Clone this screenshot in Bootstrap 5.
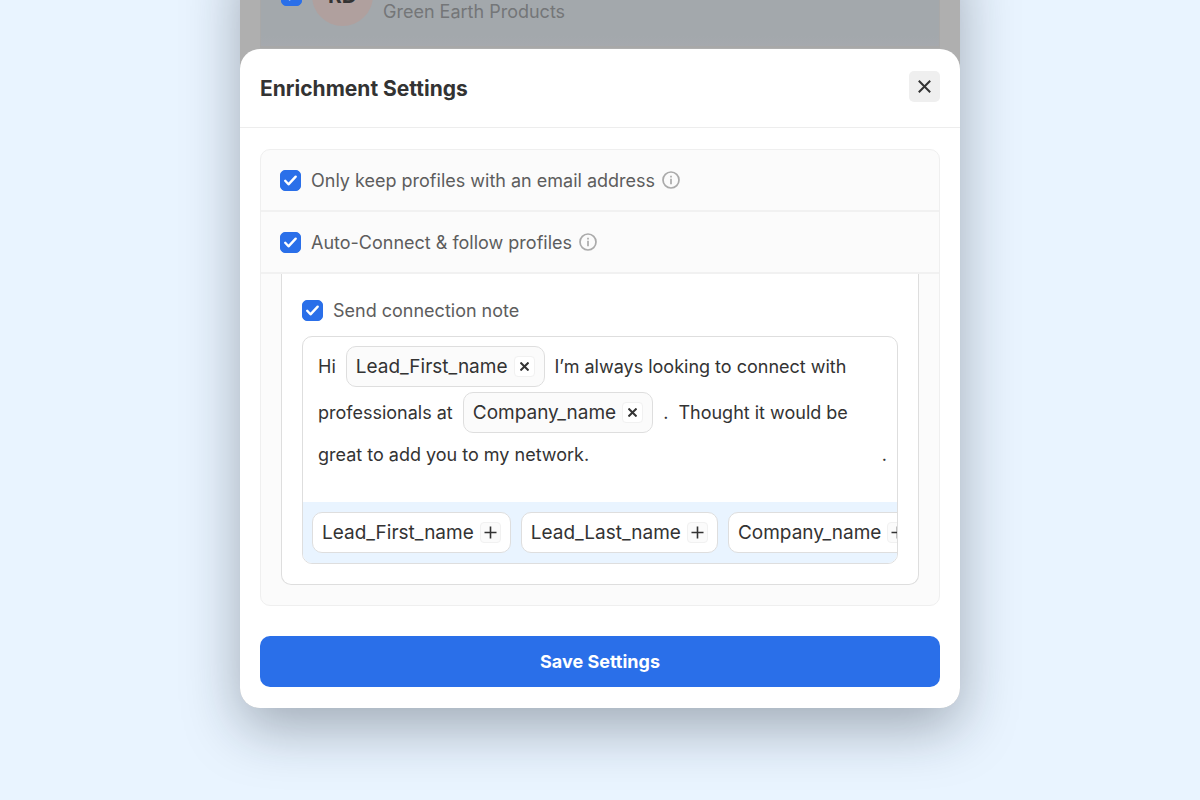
<!DOCTYPE html>
<html lang="en">
<head>
<meta charset="utf-8">
<meta name="viewport" content="width=device-width, initial-scale=1">
<title>Enrichment Settings</title>
<link rel="stylesheet" href="https://cdn.jsdelivr.net/npm/bootstrap@5.3.0/dist/css/bootstrap.min.css">
<style>
body { background: #e9f4ff; font-family: Inter, "Liberation Sans", sans-serif; font-size: 18px; line-height: 24px; color: #333; }
main { padding-bottom: 92px; overflow: hidden; }
.phone { width: 100%; max-width: 720px; margin-top: -55px; background: #afafaf; border-radius: 0 0 20px 20px; box-shadow: 0 20px 56px rgba(20, 28, 40, .34); }
.behind { padding: 0 20px 20px; margin-bottom: -19px; }
.lead-row { background: linear-gradient(#a3a8ac 90%, #a6a9ae); border: solid #a8a8a8; border-width: 0 1px 2px; color: #747678; padding: 20px; gap: 10px; }
.lead-row .form-check-input { background-color: #4468ae; border-color: #4468ae; opacity: 1; }
.avatar { width: 61px; height: 61px; background: #b0a09e; color: #333; font-size: 21px; }
.company { padding-top: 33px; }
.sheet { position: relative; background: #fff; border-radius: 20px; }
.sheet-head { padding: 22px 20px 25px; border-bottom: 1px solid #ededed; }
.sheet-title { font-size: 21px; line-height: 26px; padding-top: 5px; }
.sheet-body { padding: 21px 20px; }
.close-btn { width: 31px; height: 31px; background: #efefef; border: 0; border-radius: 5px; padding: 0; }
.form-check-input { width: 21px; height: 21px; margin: 0; flex: none; }
.form-check-input[type=checkbox] { border-radius: 5px; }
.form-check-input:checked { background-color: #2a6fe9; border-color: #2a6fe9; }
.form-check-input:checked[type=checkbox] { background-image: url("data:image/svg+xml,%3csvg xmlns='http://www.w3.org/2000/svg' viewBox='0 0 21 21'%3e%3cpath d='M5.2 10.8l3.3 3.5 7.2-7.6' fill='none' stroke='%23fff' stroke-width='2.4' stroke-linecap='round' stroke-linejoin='round'/%3e%3c/svg%3e"); background-origin: border-box; }
label { padding-top: 2px; }
.settings { background: #fbfbfb; border: 1px solid #efefef; border-radius: 10px; margin-bottom: 30px; }
.setting { height: 62px; border-bottom: 2px solid #f1f1f1; color: #5d5d5d; gap: 10px; padding: 0 19px; }
.info { width: 18px; height: 18px; border: 0; padding: 0; background: none; margin-left: -3px; }
.note-box { background: #fff; border: 1px solid #dedede; border-top: 0; border-radius: 0 0 10px 10px; margin: 0 20px 20px; padding: 23px 20px 20px; }
.note-check { gap: 10px; color: #5d5d5d; margin-bottom: 13px; }
.editor { border: 1px solid #dedede; border-radius: 10px; overflow: hidden; }
.message { padding: 9px 10px 27px 15px; line-height: 41px; }
.line { gap: 10px; height: 41px; }
.line + .line { margin-top: 5px; }
.line + .line-last { margin-top: 1px; }
.token { height: 41px; border: 1px solid #dedede; border-radius: 10px; background: #fbfbfb; padding: 0 9px; gap: 6px; flex: none; color: #333; font-size: 19px; line-height: 24px; }
.token-btn { width: 21px; height: 21px; border: 1px solid #f1f1f1; border-radius: 4px; background: #fff; padding: 0; flex: none; }
.tokens { background: #e9f4ff; padding: 10px 9px; gap: 10px; overflow: hidden; }
.tokens .token { background: #fff; }
.tokens .token-btn { background: #fbfbfb; }
.btn-save, .btn-save:hover { background: #2a6fe9; color: #fff; border: 0; border-radius: 10px; height: 51px; font-size: 18px; font-weight: 700; }
svg { display: block; }
</style>
</head>
<body>
<main class="d-flex justify-content-center">
  <div class="phone">
    <div class="behind">
      <div class="lead-row d-flex align-items-center">
        <input class="form-check-input" type="checkbox" checked disabled aria-label="Green Earth Products">
        <div class="avatar rounded-circle d-flex align-items-center justify-content-center fw-bold">RD</div>
        <div class="company">Green Earth Products</div>
      </div>
    </div>
    <section class="sheet" aria-labelledby="title">
      <header class="sheet-head d-flex justify-content-between align-items-start">
        <h1 class="sheet-title fw-bold mb-0" id="title">Enrichment Settings</h1>
        <button class="close-btn d-flex align-items-center justify-content-center" type="button" aria-label="Close">
          <svg width="13" height="13" viewBox="0 0 13 13" stroke="#333" stroke-width="2"><path d="M.8.8l11.4 11.4M12.2.8L.8 12.2"/></svg>
        </button>
      </header>
      <form class="sheet-body">
        <div class="settings">
          <div class="setting d-flex align-items-center">
            <input class="form-check-input" type="checkbox" id="email" checked>
            <label for="email">Only keep profiles with an email address</label>
            <button class="info" type="button" aria-label="About email filter"><svg width="18" height="18" viewBox="0 0 18 18" fill="none" stroke="#aaa" stroke-width="1.7"><circle cx="9" cy="9" r="8"/><path d="M9 7.8v5.4M9 4.8v1.8"/></svg></button>
          </div>
          <div class="setting d-flex align-items-center">
            <input class="form-check-input" type="checkbox" id="connect" checked>
            <label for="connect">Auto-Connect &amp; follow profiles</label>
            <button class="info" type="button" aria-label="About auto-connect"><svg width="18" height="18" viewBox="0 0 18 18" fill="none" stroke="#aaa" stroke-width="1.7"><circle cx="9" cy="9" r="8"/><path d="M9 7.8v5.4M9 4.8v1.8"/></svg></button>
          </div>
          <div class="note-box">
            <div class="note-check d-flex align-items-center">
              <input class="form-check-input" type="checkbox" id="note" checked>
              <label for="note">Send connection note</label>
            </div>
            <div class="editor">
              <div class="message">
                <div class="line d-flex">
                  <span>Hi</span>
                  <span class="token d-flex align-items-center">Lead_First_name
                    <button class="token-btn d-flex align-items-center justify-content-center" type="button" aria-label="Remove first name"><svg width="9" height="9" viewBox="0 0 9 9" stroke="#333" stroke-width="2"><path d="M.5.5l8 8M8.5.5l-8 8"/></svg></button></span>
                  <span class="text-nowrap">I’m always looking to connect with</span>
                </div>
                <div class="line d-flex">
                  <span class="text-nowrap">professionals at</span>
                  <span class="token d-flex align-items-center">Company_name
                    <button class="token-btn d-flex align-items-center justify-content-center" type="button" aria-label="Remove company"><svg width="9" height="9" viewBox="0 0 9 9" stroke="#333" stroke-width="2"><path d="M.5.5l8 8M8.5.5l-8 8"/></svg></button></span>
                  <span>.</span>
                  <span class="text-nowrap">Thought it would be</span>
                </div>
                <div class="line line-last d-flex justify-content-between">
                  <span>great to add you to my network.</span><span>.</span>
                </div>
              </div>
              <div class="tokens d-flex">
                <span class="token d-flex align-items-center">Lead_First_name
                  <button class="token-btn d-flex align-items-center justify-content-center" type="button" aria-label="Add first name"><svg width="13" height="13" viewBox="0 0 13 13" stroke="#333" stroke-width="1.6"><path d="M6.5.5v12M.5 6.5h12"/></svg></button></span>
                <span class="token d-flex align-items-center">Lead_Last_name
                  <button class="token-btn d-flex align-items-center justify-content-center" type="button" aria-label="Add last name"><svg width="13" height="13" viewBox="0 0 13 13" stroke="#333" stroke-width="1.6"><path d="M6.5.5v12M.5 6.5h12"/></svg></button></span>
                <span class="token d-flex align-items-center">Company_name
                  <button class="token-btn d-flex align-items-center justify-content-center" type="button" aria-label="Add company"><svg width="13" height="13" viewBox="0 0 13 13" stroke="#333" stroke-width="1.6"><path d="M6.5.5v12M.5 6.5h12"/></svg></button></span>
              </div>
            </div>
          </div>
        </div>
        <button class="btn btn-save w-100" type="button">Save Settings</button>
      </form>
    </section>
  </div>
</main>
<script src="https://cdn.jsdelivr.net/npm/bootstrap@5.3.0/dist/js/bootstrap.bundle.min.js"></script>
</body>
</html>
